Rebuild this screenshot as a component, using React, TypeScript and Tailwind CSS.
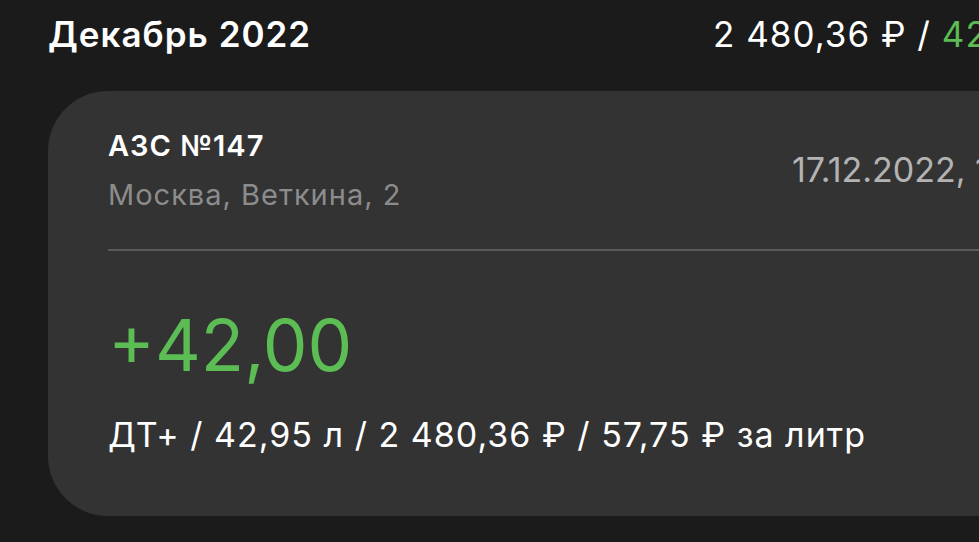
export default function App() {
  return (
    <div
      className="w-[979px] h-[542px] overflow-hidden bg-[#1b1b1b] text-white"
      style={{ fontFamily: 'Inter, "Noto Sans", sans-serif' }}
    >
      <header className="flex items-baseline pl-12 pt-[17px] leading-none text-[35px] whitespace-nowrap tracking-[1px]">
        <h1 className="w-[665px] shrink-0 font-semibold">Декабрь 2022</h1>
        <div>
          2 480,36 ₽ / <span className="text-[#5bbd54]">42,00</span>
        </div>
      </header>

      <section className="ml-12 mt-[39px] w-[1200px] rounded-l-[60px] bg-[#333333] pl-[60px] pt-10 pb-16">
        <div className="flex items-center whitespace-nowrap">
          <div className="w-[684px] shrink-0 leading-none tracking-[1px]">
            <div className="text-[29px] font-semibold">АЗС №147</div>
            <div className="mt-5 text-[29px] text-[#8c8c8c]">Москва, Веткина, 2</div>
          </div>
          <div className="text-[34px] leading-none text-[#b3b3b3]">17.12.2022, 14:32</div>
        </div>

        <div className="mt-10 h-[2px] bg-[#5a5a5a]" />

        <div className="mt-[59px] text-[71px] leading-none text-[#5bbd54]">+42,00</div>
        <div className="mt-[37px] text-[34px] leading-none whitespace-nowrap tracking-[1px]">
          ДТ+ / 42,95 л / 2 480,36 ₽ / 57,75 ₽ за литр
        </div>
      </section>
    </div>
  );
}
